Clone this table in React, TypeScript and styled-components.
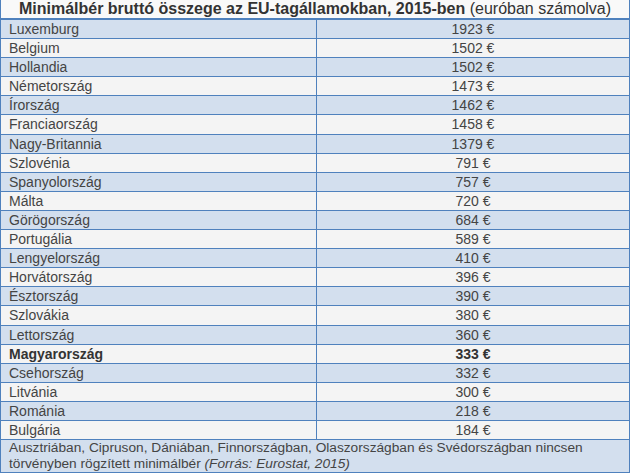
import React from "react";
import styled, { createGlobalStyle } from "styled-components";

const GlobalStyle = createGlobalStyle`
  html, body { margin: 0; padding: 0; background: #ffffff; }
  body { font-family: "Liberation Sans", Arial, sans-serif; }
`;

const BLUE = "#4F81BD";

const Table = styled.div`
  width: 630px;
  box-sizing: border-box;
  border-left: 1px solid ${BLUE};
  border-right: 1px solid ${BLUE};
  border-bottom: 1px solid ${BLUE};
  font-family: "Liberation Sans", Arial, sans-serif;
  color: #444;
`;

const Header = styled.div`
  height: 18px;
  line-height: 18px;
  border-bottom: 2px solid ${BLUE};
  background: #f9f9f9;
  text-align: center;
  font-size: 16px;
  color: #333;
  white-space: nowrap;
`;

const Title = styled.strong`
  font-weight: bold;
`;

const Row = styled.div<{ $alt: boolean; $bold?: boolean }>`
  display: grid;
  grid-template-columns: 316px 1fr;
  height: 18.1px;
  border-bottom: 1px solid ${BLUE};
  background: ${(p) => (p.$alt ? "#F4F4F4" : "#D3DFEE")};
  font-size: 14px;
  line-height: 19px;
  font-weight: ${(p) => (p.$bold ? "bold" : "normal")};
  color: ${(p) => (p.$bold ? "#333" : "#444")};
`;

const NameCell = styled.div`
  box-sizing: border-box;
  border-right: 1px solid ${BLUE};
  padding-left: 8px;
  white-space: nowrap;
  overflow: visible;
`;

const ValueCell = styled.div`
  text-align: center;
  white-space: nowrap;
`;

const Footer = styled.div`
  background: #D3DFEE;
  font-size: 13.7px;
  line-height: 15.8px;
  padding: 0 8px;
  color: #444;
`;

const FooterLine = styled.div`
  white-space: nowrap;
`;

const Source = styled.em`
  font-style: italic;
`;

const data: [string, number][] = [
  ["Luxemburg", 1923],
  ["Belgium", 1502],
  ["Hollandia", 1502],
  ["Németország", 1473],
  ["Írország", 1462],
  ["Franciaország", 1458],
  ["Nagy-Britannia", 1379],
  ["Szlovénia", 791],
  ["Spanyolország", 757],
  ["Málta", 720],
  ["Görögország", 684],
  ["Portugália", 589],
  ["Lengyelország", 410],
  ["Horvátország", 396],
  ["Észtország", 390],
  ["Szlovákia", 380],
  ["Lettország", 360],
  ["Magyarország", 333],
  ["Csehország", 332],
  ["Litvánia", 300],
  ["Románia", 218],
  ["Bulgária", 184],
];

export default function App() {
  return (
    <>
      <GlobalStyle />
      <Table>
        <Header>
          <Title>Minimálbér bruttó összege az EU-tagállamokban, 2015-ben</Title>{" "}
          (euróban számolva)
        </Header>
        {data.map(([name, value], i) => (
          <Row key={name} $alt={i % 2 === 1} $bold={name === "Magyarország"}>
            <NameCell>{name}</NameCell>
            <ValueCell>{value} €</ValueCell>
          </Row>
        ))}
        <Footer>
          <FooterLine>
            Ausztriában, Cipruson, Dániában, Finnországban, Olaszországban és Svédországban nincsen
          </FooterLine>
          <FooterLine>
            törvényben rögzített minimálbér <Source>(Forrás: Eurostat, 2015)</Source>
          </FooterLine>
        </Footer>
      </Table>
    </>
  );
}
